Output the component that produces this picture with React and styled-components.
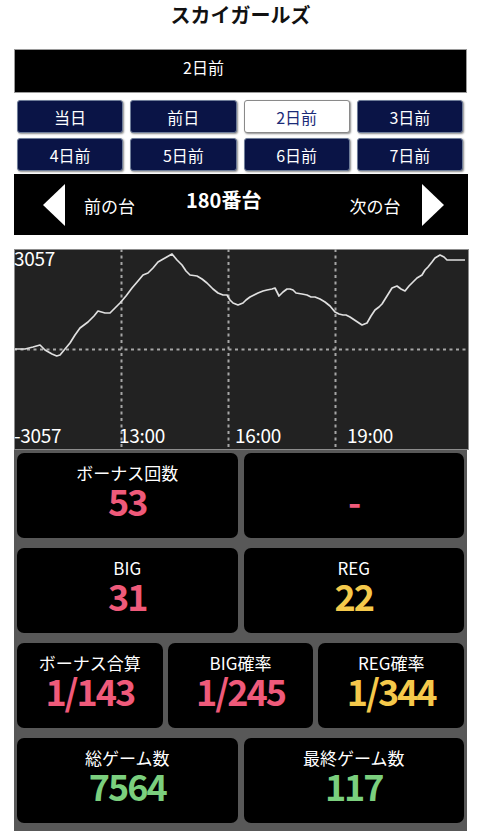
import React from "react";
import styled, { createGlobalStyle } from "styled-components";

const GlobalStyle = createGlobalStyle`
  html, body { margin: 0; padding: 0; background: #ffffff; }
  body { font-family: "Noto Sans CJK JP", "Noto Sans", sans-serif; }
  * { box-sizing: border-box; }
`;

const Page = styled.div`
  width: 480px;
  padding: 0 13px 0 14px;
`;

const Title = styled.h1`
  margin: 0 0 19px;
  height: 30px;
  line-height: 30px;
  text-align: center;
  font-size: 20px;
  font-weight: 700;
  color: #111;
`;

const DayBar = styled.div`
  height: 44px;
  background: #000;
  border: 1px solid #9a9a9a;
  color: #fff;
  font-size: 16px;
  line-height: 20px;
  padding: 7px 0 0 168px;
`;

const ButtonGrid = styled.div`
  margin-top: 7px;
  padding: 0 4px 0 3px;
  display: grid;
  grid-template-columns: repeat(4, 1fr);
  gap: 5px 7px;
`;

const DayButton = styled.div`
  height: 33px;
  display: flex;
  align-items: center;
  justify-content: center;
  border-radius: 3px;
  font-size: 16px;
  border: 1px solid ${(p) => (p.$active ? "#8a8a8a" : "#6f7d99")};
  background: ${(p) => (p.$active ? "#ffffff" : "#0a1446")};
  color: ${(p) => (p.$active ? "#1b2b78" : "#ffffff")};
  box-shadow: 1px 1px 2px rgba(0, 0, 0, 0.45);
`;

const NavBar = styled.div`
  margin-top: 3px;
  width: 454px;
  height: 61px;
  background: #000;
  color: #fff;
  display: flex;
  align-items: center;
  padding-left: 29px;
`;

const Arrow = styled.div`
  width: 0;
  height: 0;
  border-top: 21px solid transparent;
  border-bottom: 21px solid transparent;
  ${(p) =>
    p.$dir === "left"
      ? "border-right: 22px solid #fff;"
      : "border-left: 22px solid #fff; margin-left: 22px;"}
  margin-top: 1px;
`;

const NavLabel = styled.span`
  font-size: 17px;
  line-height: 20px;
  margin-left: ${(p) => p.$ml}px;
  padding-top: 2px;
`;

const MachineNo = styled.span`
  font-size: 20px;
  font-weight: 700;
  line-height: 24px;
  margin-left: ${(p) => p.$ml}px;
  padding-bottom: 10px;
`;

const Chart = styled.div`
  position: relative;
  margin-top: 14px;
  width: 455px;
  height: 201px;
  background: #222222;
  border: 1px solid #8c8c8c;
`;

const ChartSvg = styled.svg`
  position: absolute;
  left: -1px;
  top: -1px;
  width: 455px;
  height: 201px;
`;

const AxisLabel = styled.span`
  position: absolute;
  color: #fff;
  font-size: 19px;
  line-height: 20px;
  letter-spacing: -0.3px;
  left: ${(p) => p.$x}px;
  top: ${(p) => p.$y}px;
`;

const Stats = styled.div`
  width: 453px;
  background: #585858;
  padding: 3px 3px 8px;
  display: flex;
  flex-direction: column;
  gap: 10px;
`;

const StatRow = styled.div`
  display: grid;
  grid-template-columns: repeat(${(p) => p.$cols}, 1fr);
  gap: ${(p) => (p.$cols === 3 ? 5 : 6)}px;
`;

const Card = styled.div`
  height: 85px;
  background: #000;
  border-radius: 7px;
  text-align: center;
  padding-top: 10px;
`;

const CardLabel = styled.div`
  height: 20px;
  font-size: 17px;
  line-height: 20px;
  color: #fff;
`;

const CardValue = styled.div`
  font-size: 36px;
  line-height: 34px;
  font-weight: 700;
  letter-spacing: -2px;
  color: ${(p) => p.$color};
`;

const PINK = "#ef5a7a";
const YELLOW = "#f5c94b";
const GREEN = "#7bcf7e";

const days = ["当日", "前日", "2日前", "3日前", "4日前", "5日前", "6日前", "7日前"];

const pts = [
  [1, 100], [11, 100], [19, 98], [26, 96], [31, 101], [38, 105], [42.7, 107], [46, 106],
  [51, 100], [56, 94], [61, 86], [66, 79], [74, 73], [80, 67], [84, 62], [91, 64], [96, 64],
  [101, 59], [106, 54], [112, 47], [118, 39], [124, 32], [129, 26], [134, 24], [139, 19],
  [144, 13], [151, 9], [158, 5], [163, 11], [168, 16], [172, 22], [176, 26], [183, 27],
  [188, 30], [193, 34], [199, 40], [204, 44], [209, 46], [213, 46], [216, 51], [219, 54],
  [224, 56], [229, 54], [232, 51], [236, 48], [240, 46], [244, 44], [249, 42], [253, 41],
  [258, 40], [261, 39], [265, 47], [269, 43], [273, 40], [276, 40], [279, 41], [282, 44],
  [288, 45], [293, 46], [297, 48], [301, 48], [306, 50], [311, 53], [316, 57], [321, 63],
  [325, 65], [329, 66], [332, 66], [336, 68], [342, 72], [348, 76], [353, 74], [357, 67],
  [361, 61], [365, 58], [368, 55], [373, 47], [378, 39], [383, 37], [387, 40], [391, 42],
  [395, 37], [399, 33], [403, 29], [408, 26], [411, 21], [414, 18], [418, 13], [421, 9],
  [426, 6], [430, 8], [433, 11], [442, 11], [451, 11],
];

function ChartPanel() {
  return (
    <Chart>
      <ChartSvg viewBox="0 0 455 201">
        <g stroke="#a6a6a6" strokeWidth="2" strokeDasharray="3 3.5" fill="none">
          <line x1="0" y1="100.5" x2="455" y2="100.5" />
          <line x1="107.5" y1="0" x2="107.5" y2="201" />
          <line x1="214.5" y1="0" x2="214.5" y2="201" />
          <line x1="321.5" y1="0" x2="321.5" y2="201" />
        </g>
        <polyline
          points={pts.map((p) => p.join(",")).join(" ")}
          fill="none"
          stroke="#e0e0e0"
          strokeWidth="1.7"
          strokeLinejoin="round"
        />
      </ChartSvg>
      <AxisLabel $x={-1} $y={-2}>3057</AxisLabel>
      <AxisLabel $x={-1} $y={175}>-3057</AxisLabel>
      <AxisLabel $x={104} $y={175}>13:00</AxisLabel>
      <AxisLabel $x={220} $y={175}>16:00</AxisLabel>
      <AxisLabel $x={332} $y={175}>19:00</AxisLabel>
    </Chart>
  );
}

function Stat({ label, value, color }) {
  return (
    <Card>
      <CardLabel>{label}</CardLabel>
      <CardValue $color={color}>{value}</CardValue>
    </Card>
  );
}

export default function App() {
  return (
    <>
      <GlobalStyle />
      <Page>
        <Title>スカイガールズ</Title>
        <DayBar>2日前</DayBar>
        <ButtonGrid>
          {days.map((d) => (
            <DayButton key={d} $active={d === "2日前"}>
              {d}
            </DayButton>
          ))}
        </ButtonGrid>
        <NavBar>
          <Arrow $dir="left" />
          <NavLabel $ml={19}>前の台</NavLabel>
          <MachineNo $ml={51}>180番台</MachineNo>
          <NavLabel $ml={88}>次の台</NavLabel>
          <Arrow $dir="right" />
        </NavBar>
        <ChartPanel />
        <Stats>
          <StatRow $cols={2}>
            <Stat label="ボーナス回数" value="53" color={PINK} />
            <Stat label="" value="-" color={PINK} />
          </StatRow>
          <StatRow $cols={2}>
            <Stat label="BIG" value="31" color={PINK} />
            <Stat label="REG" value="22" color={YELLOW} />
          </StatRow>
          <StatRow $cols={3}>
            <Stat label="ボーナス合算" value="1/143" color={PINK} />
            <Stat label="BIG確率" value="1/245" color={PINK} />
            <Stat label="REG確率" value="1/344" color={YELLOW} />
          </StatRow>
          <StatRow $cols={2}>
            <Stat label="総ゲーム数" value="7564" color={GREEN} />
            <Stat label="最終ゲーム数" value="117" color={GREEN} />
          </StatRow>
        </Stats>
      </Page>
    </>
  );
}
